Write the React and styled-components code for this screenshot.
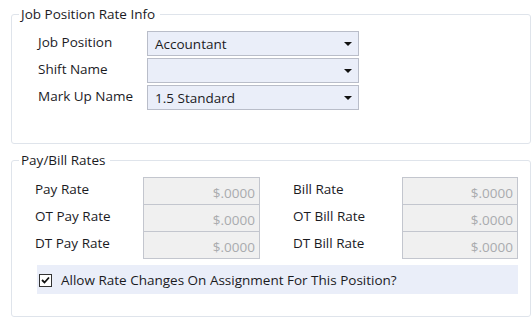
import React from 'react';
import styled, {createGlobalStyle} from 'styled-components';

const GlobalStyle = createGlobalStyle`
body {
    margin: 0;
    background: #ffffff;
    font-family: "Open Sans", "Noto Sans", sans-serif;
    font-size: 13.5px;
    color: #1b1b1f;
}
`

const Page = styled.div`
    padding: 6px 0 0 11px;
    width: 520px;
    display: flex;
    flex-direction: column;
    gap: 8px;
`

const Group = styled.fieldset`
    margin: 0;
    padding: 9px 0 0 7px;
    border: 1px solid #dfe4eb;
    border-radius: 3px;
    height: ${props => props.$height}px;
    box-sizing: border-box;
    min-width: 0;
`

const Legend = styled.legend`
    padding: 0 5px 0 2px;
    line-height: 16px;
    color: #1b1b1f;
`

const InfoGrid = styled.div`
    margin-left: 19px;
    display: grid;
    grid-template-columns: 109px 212px;
    grid-auto-rows: 25px;
    row-gap: 2px;
    align-items: center;
`

const Label = styled.span`
    white-space: nowrap;
    line-height: 16px;
    margin-top: ${props => props.$offset || 0}px;
`

const Select = styled.div`
    height: 25px;
    box-sizing: border-box;
    border: 1px solid #b9bdc9;
    background: #eaeef9;
    display: flex;
    align-items: center;
    padding: 1px 6px 0 7px;
`

const SelectText = styled.span`
    flex: 1;
`

const Arrow = styled.span`
    width: 0;
    height: 0;
    border-left: 4px solid transparent;
    border-right: 4px solid transparent;
    border-top: 4px solid #111;
`

const RateGrid = styled.div`
    margin-left: 16px;
    display: grid;
    grid-template-columns: 108px 117px 33px 109px 116px;
    grid-auto-rows: 27px;
    align-items: center;
`

const RateInput = styled.div`
    height: 28px;
    align-self: start;
    margin-bottom: -1px;
    box-sizing: border-box;
    border: 1px solid #c3c6ce;
    background: #f0f0f0;
    color: #a9abae;
    display: flex;
    align-items: center;
    justify-content: flex-end;
    padding: 3px 4px 0 0;
`

const CheckRow = styled.label`
    margin: 7px 0 0 18px;
    width: 481px;
    height: 29px;
    box-sizing: border-box;
    background: #eaeef9;
    display: flex;
    align-items: center;
    gap: 9px;
    padding: 1px 0 0 2px;
`

const Box = styled.span`
    width: 13px;
    height: 13px;
    box-sizing: border-box;
    border: 1px solid #333;
    background: #fff;
    display: flex;
    align-items: center;
    justify-content: center;
`

const rates = [
    ['Pay Rate', 'Bill Rate'],
    ['OT Pay Rate', 'OT Bill Rate'],
    ['DT Pay Rate', 'DT Bill Rate'],
];

class App extends React.Component {

    render() {
        return (
            <Page>
                <GlobalStyle />
                <Group $height={138}>
                    <Legend>Job Position Rate Info</Legend>
                    <InfoGrid>
                        <Label $offset={-3}>Job Position</Label>
                        <Select><SelectText>Accountant</SelectText><Arrow /></Select>
                        <Label $offset={-3}>Shift Name</Label>
                        <Select><SelectText></SelectText><Arrow /></Select>
                        <Label $offset={-3}>Mark Up Name</Label>
                        <Select><SelectText>1.5 Standard</SelectText><Arrow /></Select>
                    </InfoGrid>
                </Group>
                <Group $height={165}>
                    <Legend>Pay/Bill Rates</Legend>
                    <RateGrid>
                        {rates.map(([pay, bill]) => (
                            <React.Fragment key={pay}>
                                <Label $offset={-4}>{pay}</Label>
                                <RateInput>$.0000</RateInput>
                                <span />
                                <Label $offset={-4}>{bill}</Label>
                                <RateInput>$.0000</RateInput>
                            </React.Fragment>
                        ))}
                    </RateGrid>
                    <CheckRow>
                        <Box>
                            <svg width="9" height="8" viewBox="0 0 9 8">
                                <path d="M1 4 L3.5 6.5 L8 1.5" fill="none" stroke="#111" strokeWidth="1.8" />
                            </svg>
                        </Box>
                        Allow Rate Changes On Assignment For This Position?
                    </CheckRow>
                </Group>
            </Page>
        )
    }
}

export default App;
